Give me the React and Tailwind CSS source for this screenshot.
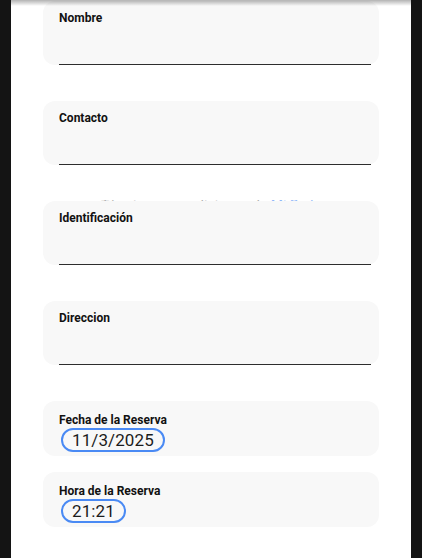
import React from "react";

function TextCard({ label }) {
  return (
    <div className="h-[64px] rounded-[12px] bg-[#f8f8f8] pt-[10px] pl-4 pr-2 flex flex-col">
      <div className="text-[12px] font-bold text-[#111] leading-[14px]">{label}</div>
      <div className="flex-1 border-b border-[#2e2e2e]" />
    </div>
  );
}

function PillCard({ label, value }) {
  return (
    <div className="h-[55px] rounded-[12px] bg-[#f8f8f8] pt-[12px] pl-4 flex flex-col items-start">
      <div className="text-[12px] font-bold text-[#111] leading-[14px]">{label}</div>
      <div className="mt-[1px] ml-[2px] h-[24px] rounded-full border-2 border-[#4a8af4] px-[9px] flex items-center text-[17px] leading-none text-[#1c1c1c] tracking-[0.1px]">
        {value}
      </div>
    </div>
  );
}

export default function App() {
  return (
    <div
      className="relative w-[422px] h-[558px] bg-[#141414] flex justify-center overflow-hidden"
      style={{ fontFamily: "Roboto, 'Liberation Sans', sans-serif" }}
    >
      <div className="w-[400px] h-full bg-white px-[32px] pt-[1px] flex flex-col">
        <TextCard label="Nombre" />
        <div className="h-[36px]" />
        <TextCard label="Contacto" />
        <div className="h-[36px] flex flex-col justify-end pl-[58px]">
          <div className="h-[1px] overflow-hidden">
            <div className="-mt-[2px] text-[14px] leading-none whitespace-nowrap opacity-60">
              <span className="text-[#777]">Términos y condiciones de </span>
              <span className="text-[#4a8af4]">Mi Sede</span>
            </div>
          </div>
        </div>
        <TextCard label="Identificación" />
        <div className="h-[36px]" />
        <TextCard label="Direccion" />
        <div className="h-[36px]" />
        <PillCard label="Fecha de la Reserva" value="11/3/2025" />
        <div className="h-[16px]" />
        <PillCard label="Hora de la Reserva" value="21:21" />
      </div>
      <div className="absolute top-0 left-[11px] w-[400px] h-[6px] bg-linear-to-b from-black/30 to-transparent" />
    </div>
  );
}
